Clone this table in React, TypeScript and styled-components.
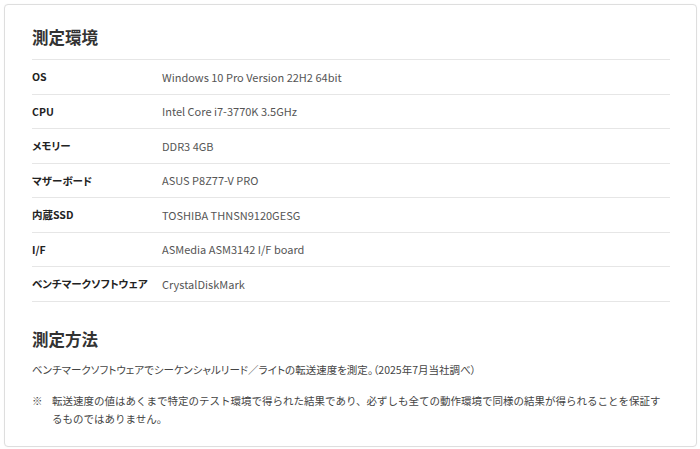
import React from "react";
import styled, { createGlobalStyle } from "styled-components";

const GlobalStyle = createGlobalStyle`
  html, body {
    margin: 0;
    padding: 0;
    background: #ffffff;
  }
  body {
    font-family: "Noto Sans CJK JP", "Noto Sans", sans-serif;
    color: #333333;
  }
  * { box-sizing: border-box; }
`;

const Page = styled.div`
  padding: 4px 3px 3px 4px;
`;

const Card = styled.section`
  border: 1px solid #dedede;
  border-radius: 4px;
  background: #ffffff;
  box-shadow: 0 0 2px rgba(0, 0, 0, 0.04);
  padding: 20px 26px 18px 27px;
`;

const Heading = styled.h2<{ $spaced?: boolean }>`
  margin: ${(p) => (p.$spaced ? "25px" : "0")} 0 10px 0;
  font-size: 16.5px;
  line-height: 24px;
  font-weight: 700;
  color: #333333;
`;

const SpecTable = styled.dl`
  margin: 0;
  border-top: 1px solid #e6e6e6;
`;

const SpecRow = styled.div`
  display: grid;
  grid-template-columns: 130px 1fr;
  align-items: center;
  height: 34.5px;
  border-bottom: 1px solid #e6e6e6;
`;

const Label = styled.dt`
  margin: 0;
  font-size: 10.5px;
  font-weight: 700;
  color: #222222;
  white-space: nowrap;
  font-feature-settings: "palt";
`;

const Value = styled.dd`
  margin: 0;
  font-size: 11px;
  color: #555555;
`;

const Body = styled.p`
  margin: 10.5px 0 0 0;
  font-size: 10.5px;
  line-height: 18px;
  color: #444444;
  font-feature-settings: "palt";
`;

const Note = styled.div`
  display: grid;
  grid-template-columns: 20px 1fr;
  margin-top: 13px;
  font-size: 10.5px;
  line-height: 18px;
  color: #444444;
`;

const Mark = styled.span``;
const NoteText = styled.span``;

const specs: [string, string][] = [
  ["OS", "Windows 10 Pro Version 22H2 64bit"],
  ["CPU", "Intel Core i7-3770K 3.5GHz"],
  ["メモリー", "DDR3 4GB"],
  ["マザーボード", "ASUS P8Z77-V PRO"],
  ["内蔵SSD", "TOSHIBA THNSN9120GESG"],
  ["I/F", "ASMedia ASM3142 I/F board"],
  ["ベンチマークソフトウェア", "CrystalDiskMark"],
];

export default function App() {
  return (
    <>
      <GlobalStyle />
      <Page>
        <Card>
          <Heading>測定環境</Heading>
          <SpecTable>
            {specs.map(([k, v]) => (
              <SpecRow key={k}>
                <Label>{k}</Label>
                <Value>{v}</Value>
              </SpecRow>
            ))}
          </SpecTable>
          <Heading $spaced>測定方法</Heading>
          <Body>
            ベンチマークソフトウェアでシーケンシャルリード／ライトの転送速度を測定。（2025年7月当社調べ）
          </Body>
          <Note>
            <Mark>※</Mark>
            <NoteText>
              転送速度の値はあくまで特定のテスト環境で得られた結果であり、必ずしも全ての動作環境で同様の結果が得られることを保証するものではありません。
            </NoteText>
          </Note>
        </Card>
      </Page>
    </>
  );
}
